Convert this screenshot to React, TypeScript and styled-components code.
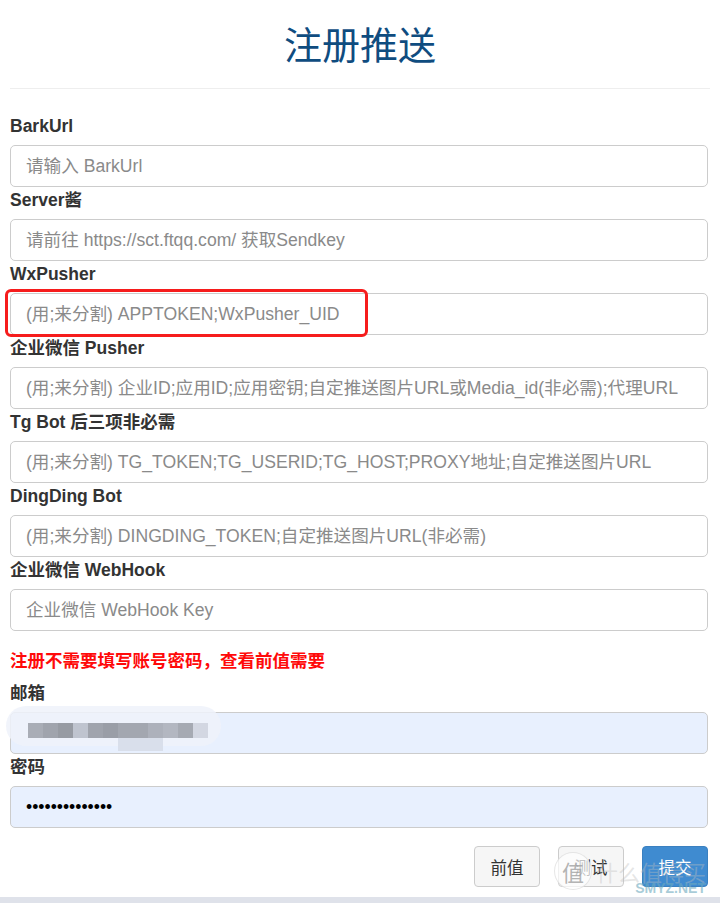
import React from 'react';
import styled, { createGlobalStyle } from 'styled-components';

const GlobalStyle = createGlobalStyle`
  html, body {
    margin: 0;
    padding: 0;
    background: #fff;
  }
  body {
    font-family: "Liberation Sans", Arial, "Noto Sans CJK SC", sans-serif;
    color: #333;
  }
  * {
    box-sizing: border-box;
  }
`;

type Field = { label: string; placeholder: string; marked?: boolean };

const fields: Field[] = [
  { label: 'BarkUrl', placeholder: '请输入 BarkUrl' },
  { label: 'Server酱', placeholder: '请前往 https://sct.ftqq.com/ 获取Sendkey' },
  { label: 'WxPusher', placeholder: '(用;来分割) APPTOKEN;WxPusher_UID', marked: true },
  { label: '企业微信 Pusher', placeholder: '(用;来分割) 企业ID;应用ID;应用密钥;自定推送图片URL或Media_id(非必需);代理URL' },
  { label: 'Tg Bot 后三项非必需', placeholder: '(用;来分割) TG_TOKEN;TG_USERID;TG_HOST;PROXY地址;自定推送图片URL' },
  { label: 'DingDing Bot', placeholder: '(用;来分割) DINGDING_TOKEN;自定推送图片URL(非必需)' },
  { label: '企业微信 WebHook', placeholder: '企业微信 WebHook Key' },
];

// mosaic blocks over the blurred e-mail address
const mosaic = [
  '#a9adb6', '#a0a4ad', '#979ba3', '#bfc4cf', '#a0a4ad', '#9a9ea7',
  '#a3a7b0', '#a3a7b0', '#adb1bb', '#b3b7c1', '#a6aab3', '#d3d7e2',
];

export default function App() {
  return (
    <Page>
      <GlobalStyle />
      <Title>注册推送</Title>
      <Rule />
      {fields.map((f) => (
        <Group key={f.label}>
          <Label>{f.label}</Label>
          <InputWrap>
            <TextInput placeholder={f.placeholder} />
            {f.marked && <Marker />}
          </InputWrap>
        </Group>
      ))}
      <Notice>注册不需要填写账号密码，查看前值需要</Notice>
      <Group>
        <Label>邮箱</Label>
        <InputWrap>
          <TextInput autofilled readOnly value="" />
          <Smear />
          <Mosaic width="182" height="28" viewBox="0 0 182 28">
            {mosaic.map((c, i) => (
              <rect key={i} x={i * 15} y={0} width={15} height={15} fill={c} />
            ))}
            <rect x={90} y={15} width={45} height={13} fill="#d9dfeb" />
          </Mosaic>
        </InputWrap>
      </Group>
      <Group>
        <Label>密码</Label>
        <InputWrap>
          <TextInput autofilled type="password" readOnly value="12345678901234" />
        </InputWrap>
      </Group>
      <Actions>
        <Button>前值</Button>
        <Button>测试</Button>
        <Button primary>提交</Button>
        <Watermark>
          <Badge>值</Badge>
          <WmText>什么值得买</WmText>
          <WmSite>SMYZ.NET</WmSite>
        </Watermark>
      </Actions>
      <BottomBand />
    </Page>
  );
}

const Page = styled.div`
  width: 720px;
  padding: 0 10px;
`;

const Title = styled.h1`
  margin: 0;
  padding-top: 21px;
  height: 88px;
  text-align: center;
  font-family: "Noto Sans CJK SC", sans-serif;
  font-weight: 400;
  font-size: 38px;
  line-height: 44px;
  color: #0f4c7f;
`;

const Rule = styled.div`
  height: 1px;
  background: #eee;
  margin-bottom: 27px;
`;

const Group = styled.div`
  margin-bottom: 3px;
`;

const Label = styled.div`
  font-size: 17.5px;
  font-weight: 700;
  line-height: 20px;
  height: 20px;
  margin-bottom: 9px;
  color: #333;
`;

const InputWrap = styled.div`
  position: relative;
  width: 698px;
`;

const TextInput = styled.input<{ autofilled?: boolean }>`
  display: block;
  width: 100%;
  height: 42px;
  padding: 0 15px;
  border: 1px solid #ccc;
  border-radius: 5px;
  background: ${(p) => (p.autofilled ? '#e8f0fe' : '#fff')};
  font-family: "Liberation Sans", Arial, "Noto Sans CJK SC", sans-serif;
  font-size: 17.6px;
  color: #000;
  outline: none;

  &::placeholder {
    color: #8a8a8a;
  }
`;

const Marker = styled.div`
  position: absolute;
  left: -5px;
  top: -4px;
  width: 363px;
  height: 48px;
  border: 3px solid #f61c1c;
  border-radius: 6px;
  pointer-events: none;
`;

const Smear = styled.div`
  position: absolute;
  left: -4px;
  top: -6px;
  width: 215px;
  height: 40px;
  border-radius: 20px;
  background: rgba(238, 242, 250, 0.85);
`;

const Mosaic = styled.svg`
  position: absolute;
  left: 18px;
  top: 11px;
`;

const Notice = styled.div`
  margin-top: 19px;
  margin-bottom: 13px;
  font-family: "Noto Sans CJK SC", sans-serif;
  font-size: 17.5px;
  font-weight: 700;
  line-height: 20px;
  color: #ff0a0a;
`;

const Actions = styled.div`
  position: relative;
  display: flex;
  justify-content: flex-end;
  gap: 18px;
  margin-top: 18px;
  padding-right: 2px;
`;

const Button = styled.button<{ primary?: boolean }>`
  width: 66px;
  height: 41px;
  border-radius: 4px;
  border: 1px solid ${(p) => (p.primary ? '#3a80c0' : '#ccc')};
  background: ${(p) => (p.primary ? '#3f8bd0' : '#f6f6f6')};
  color: ${(p) => (p.primary ? '#fff' : '#333')};
  font-family: "Noto Sans CJK SC", sans-serif;
  font-size: 16.5px;
  padding: 0;
`;

const Watermark = styled.div`
  position: absolute;
  right: 4px;
  top: 6px;
  display: flex;
  align-items: center;
  gap: 4px;
  pointer-events: none;
`;

const Badge = styled.div`
  width: 38px;
  height: 38px;
  border-radius: 50%;
  background: rgba(255, 255, 255, 0.7);
  border: 1px solid rgba(205, 205, 205, 0.5);
  font-family: "Noto Sans CJK SC", sans-serif;
  font-size: 22px;
  line-height: 36px;
  text-align: center;
  color: rgba(160, 160, 160, 0.8);
`;

const WmText = styled.div`
  font-family: "Noto Sans CJK SC", sans-serif;
  font-size: 22px;
  line-height: 30px;
  color: rgba(190, 190, 190, 0.4);
`;

const WmSite = styled.div`
  position: absolute;
  right: 0;
  bottom: -6px;
  font-family: "Liberation Sans", Arial, sans-serif;
  font-size: 14px;
  font-weight: 700;
  line-height: 16px;
  color: rgba(110, 170, 190, 0.6);
`;

const BottomBand = styled.div`
  margin: 10px -10px 0;
  height: 6px;
  background: #dfe2ea;
`;
